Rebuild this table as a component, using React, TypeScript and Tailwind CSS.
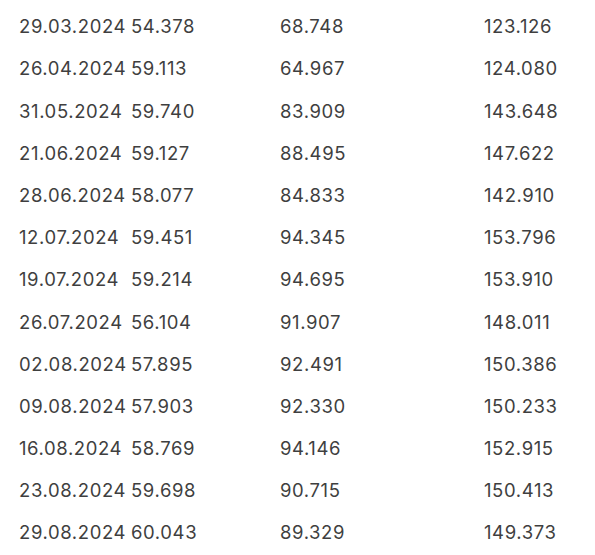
const ROWS: [string, string, string, string][] = [
  ["29.03.2024", "54.378", "68.748", "123.126"],
  ["26.04.2024", "59.113", "64.967", "124.080"],
  ["31.05.2024", "59.740", "83.909", "143.648"],
  ["21.06.2024", "59.127", "88.495", "147.622"],
  ["28.06.2024", "58.077", "84.833", "142.910"],
  ["12.07.2024", "59.451", "94.345", "153.796"],
  ["19.07.2024", "59.214", "94.695", "153.910"],
  ["26.07.2024", "56.104", "91.907", "148.011"],
  ["02.08.2024", "57.895", "92.491", "150.386"],
  ["09.08.2024", "57.903", "92.330", "150.233"],
  ["16.08.2024", "58.769", "94.146", "152.915"],
  ["23.08.2024", "59.698", "90.715", "150.413"],
  ["29.08.2024", "60.043", "89.329", "149.373"],
]

export default function App() {
  return (
    <div className="h-[555px] w-[595px] overflow-hidden bg-white pt-[6px] text-[#3f3f3f] [font-family:Inter,sans-serif] text-[18.5px] tracking-[0.6px]">
      {ROWS.map((row) => (
        <div
          key={row[0]}
          className="grid h-[42.2px] grid-cols-[112px_149px_204px_1fr] items-center pl-[19px]"
        >
          {row.map((cell, i) => (
            <span key={i}>{cell}</span>
          ))}
        </div>
      ))}
    </div>
  )
}
